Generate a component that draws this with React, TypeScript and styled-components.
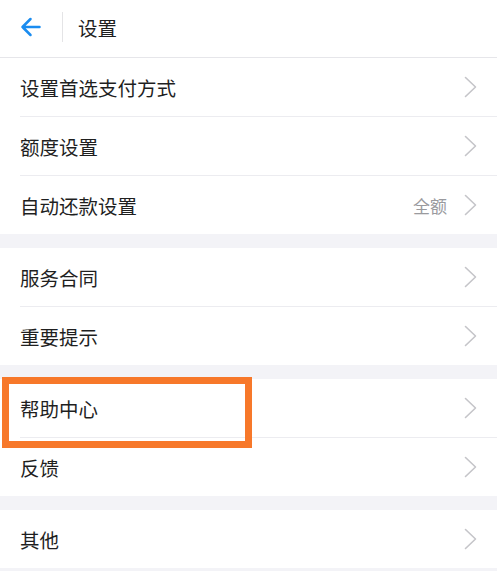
import React from "react";
import styled, { createGlobalStyle } from "styled-components";

const GlobalStyle = createGlobalStyle`
  html, body {
    margin: 0;
    padding: 0;
    background: #f3f3f7;
    font-family: "Noto Sans CJK SC", "Noto Sans", sans-serif;
  }
`;

const Page = styled.div`
  width: 497px;
  min-height: 571px;
  background: #f3f3f7;
  display: flex;
  flex-direction: column;
`;

const Header = styled.header`
  height: 57px;
  background: #fff;
  border-bottom: 1px solid #e6e6ea;
  display: flex;
  align-items: center;
  padding-left: 20px;
  padding-bottom: 3px;
  box-sizing: border-box;
  height: 58px;
`;

const BackButton = styled.button`
  border: 0;
  background: none;
  padding: 0;
  width: 22px;
  height: 20px;
  display: flex;
  align-items: center;
  cursor: pointer;
`;

const HeaderDivider = styled.div`
  width: 1px;
  height: 30px;
  background: #e4e4e6;
  margin: 0 15px 0 20px;
`;

const Title = styled.h1`
  margin: 0;
  font-size: 19.5px;
  font-weight: 400;
  color: #1f1f1f;
`;

const List = styled.div`
  display: flex;
  flex-direction: column;
  gap: 14px;
`;

const Section = styled.section`
  position: relative;
  background: #fff;
  display: flex;
  flex-direction: column;
`;

const Row = styled.div`
  height: 58px;
  display: flex;
  align-items: center;
  padding: 0 20px;
  font-size: 19.5px;
  color: #1f1f1f;
`;

const Label = styled.span`
  flex: 1;
`;

const Value = styled.span`
  font-size: 17px;
  color: #9a9a9e;
  margin-right: 17px;
`;

const Divider = styled.div`
  height: 1px;
  margin-left: 20px;
  background: #ececf0;
`;

const Highlight = styled.div`
  position: absolute;
  left: 2px;
  top: -2px;
  width: 250px;
  height: 71px;
  box-sizing: border-box;
  border: 7px solid #f7782a;
  pointer-events: none;
`;

const BackArrow = () => (
  <svg width="21" height="20" viewBox="0 0 21 20" fill="none">
    <path
      d="M2.5 10 H19.5 M10.5 2 L2.5 10 L10.5 18"
      stroke="#1a8cf0"
      strokeWidth="2.5"
      strokeLinecap="round"
      strokeLinejoin="round"
    />
  </svg>
);

const Chevron = () => (
  <svg width="13" height="22" viewBox="0 0 13 22" fill="none">
    <path
      d="M1.5 1.5 L11.5 11 L1.5 20.5"
      stroke="#c5c5c9"
      strokeWidth="1.6"
      strokeLinecap="round"
      strokeLinejoin="round"
    />
  </svg>
);

interface Item {
  label: string;
  value?: string;
}

const sections: { items: Item[]; highlight?: boolean }[] = [
  {
    items: [
      { label: "设置首选支付方式" },
      { label: "额度设置" },
      { label: "自动还款设置", value: "全额" },
    ],
  },
  { items: [{ label: "服务合同" }, { label: "重要提示" }] },
  { items: [{ label: "帮助中心" }, { label: "反馈" }], highlight: true },
  { items: [{ label: "其他" }] },
];

export default function App() {
  return (
    <Page>
      <GlobalStyle />
      <Header>
        <BackButton aria-label="返回">
          <BackArrow />
        </BackButton>
        <HeaderDivider />
        <Title>设置</Title>
      </Header>
      <List>
        {sections.map((section, si) => (
          <Section key={si}>
            {section.items.map((item, i) => (
              <React.Fragment key={item.label}>
                {i > 0 && <Divider />}
                <Row>
                  <Label>{item.label}</Label>
                  {item.value && <Value>{item.value}</Value>}
                  <Chevron />
                </Row>
              </React.Fragment>
            ))}
            {section.highlight && <Highlight />}
          </Section>
        ))}
      </List>
    </Page>
  );
}
